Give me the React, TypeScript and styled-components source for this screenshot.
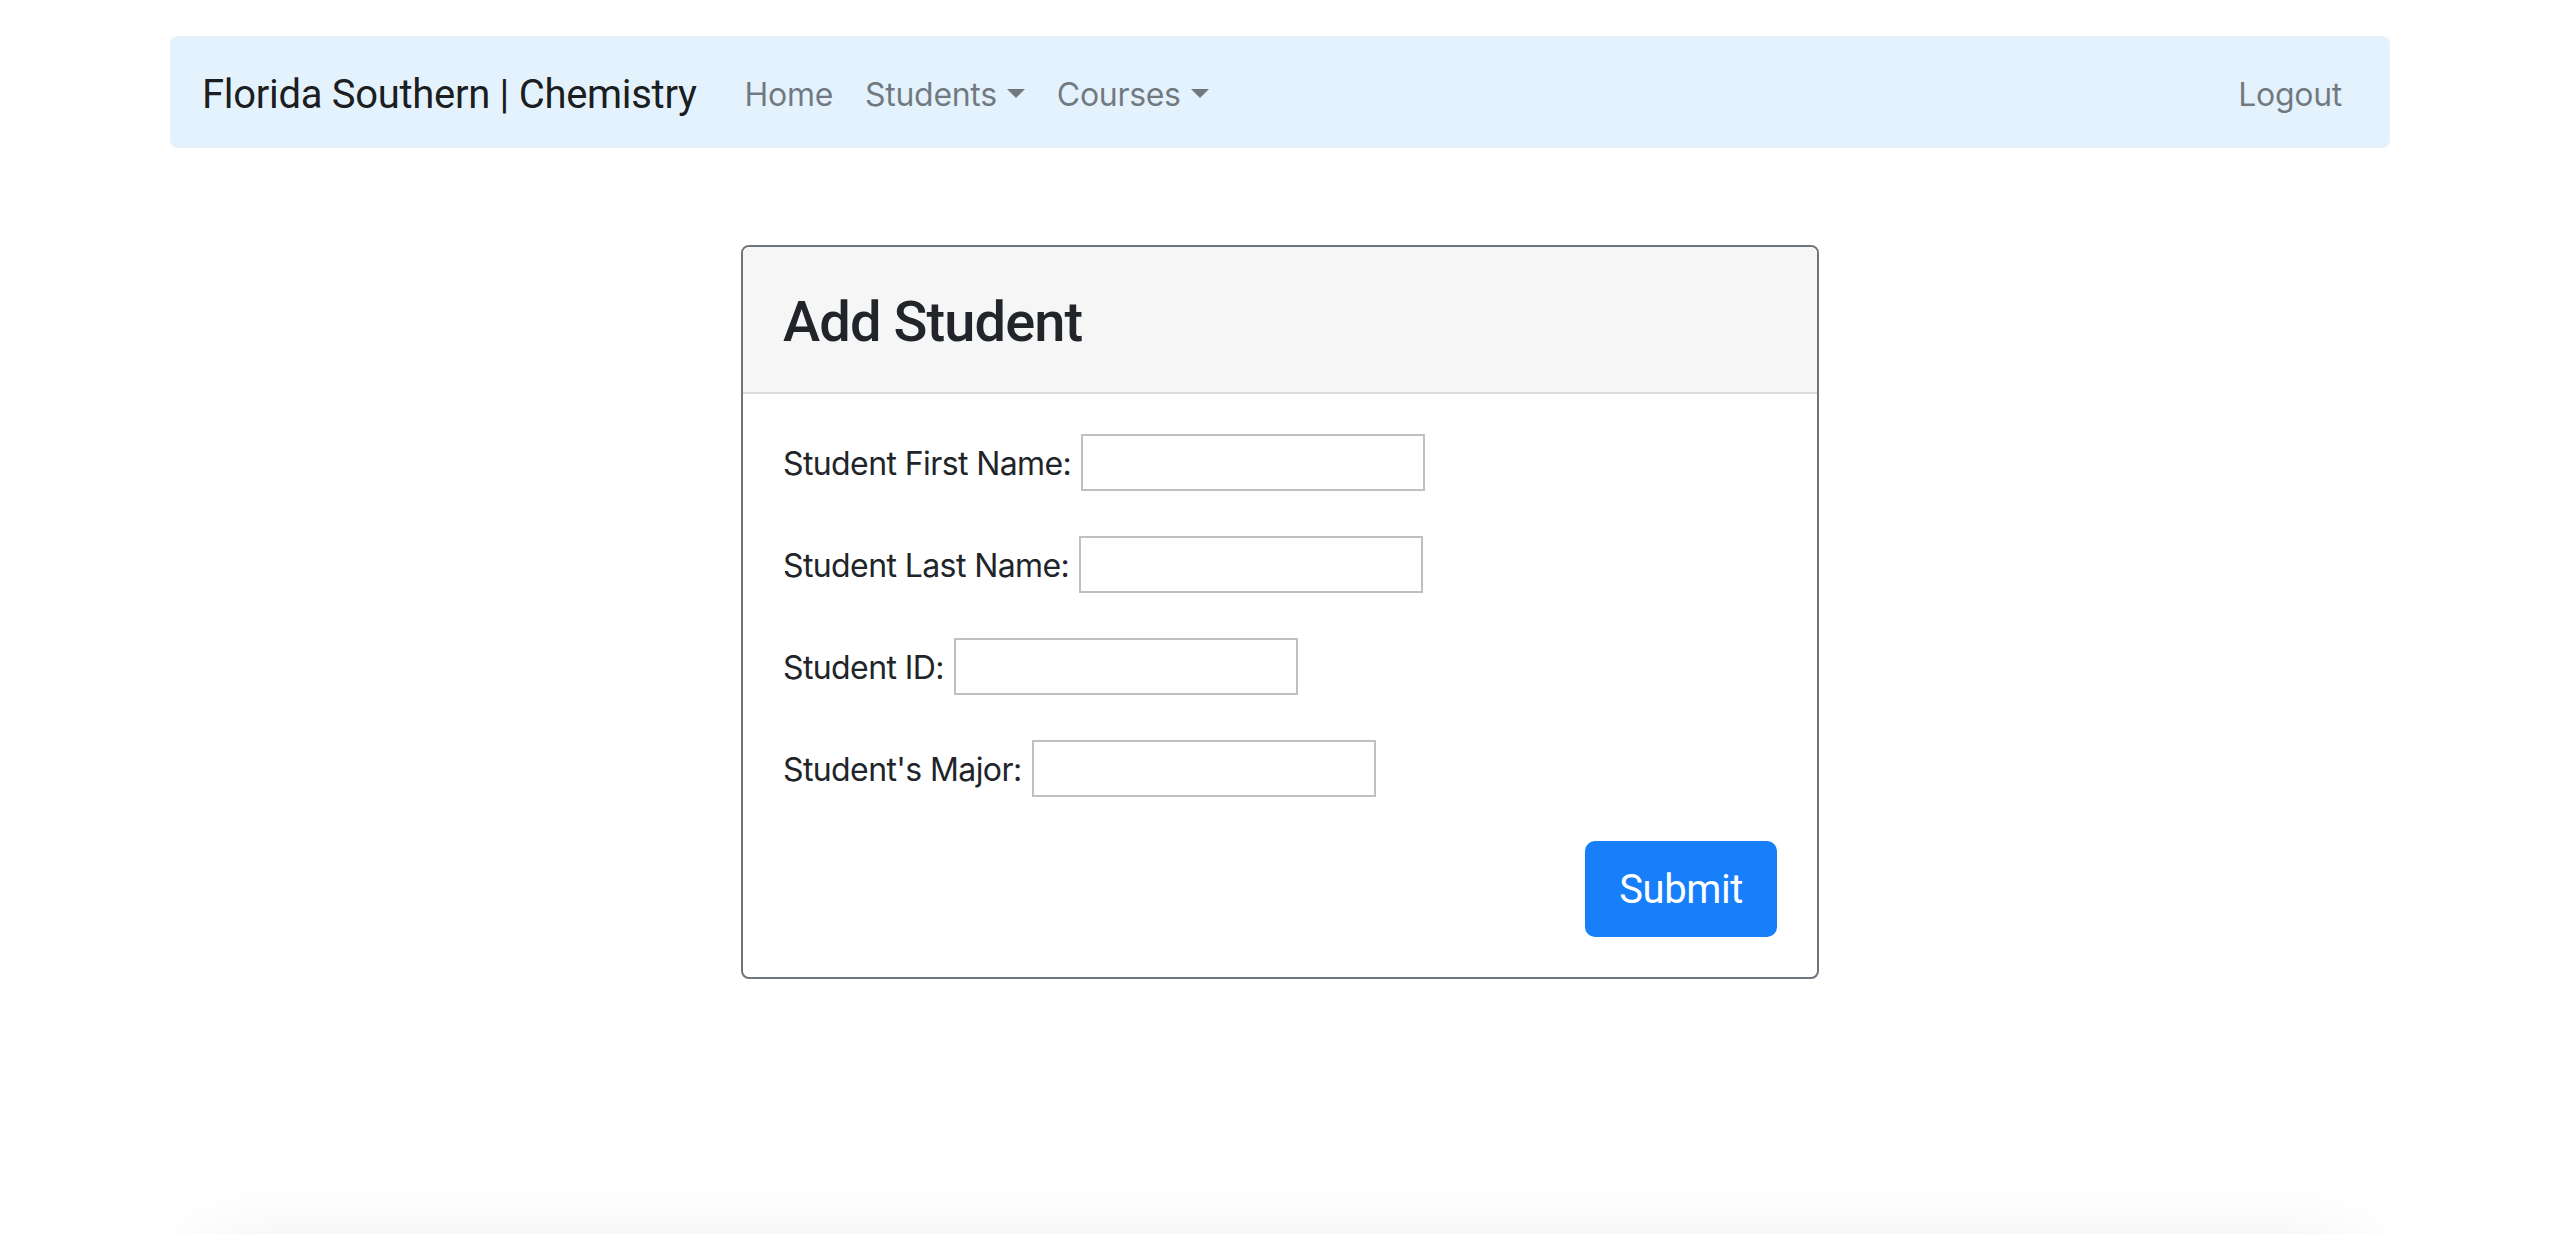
import styled, { createGlobalStyle } from 'styled-components';

const GlobalStyle = createGlobalStyle`
  html, body {
    margin: 0;
    padding: 0;
    background-color: #ffffff;
  }

  body {
    font-family: Inter, "Liberation Sans", sans-serif;
    color: #212529;
    overflow: hidden;
  }

  * {
    box-sizing: border-box;
  }
`;

// large text renders in the narrower display cut on the original, Roboto is closer there
const displayFont = `Roboto, Inter, "Liberation Sans", sans-serif`;

const Page = styled.div.withConfig({ displayName: 'Page' })`
  width: 2220px;
  margin: 0 auto;
  padding-top: 36px;
`;

const Navbar = styled.nav.withConfig({ displayName: 'Navbar' })`
  display: flex;
  align-items: center;
  height: 112px;
  padding: 19px 32px 13px;
  background-color: #e3f2fd;
  border-radius: 8px;
`;

const Brand = styled.a.withConfig({ displayName: 'Brand' })`
  margin-right: 32px;
  padding: 10px 0;
  font-family: ${displayFont};
  font-size: 40px;
  line-height: 60px;
  letter-spacing: -0.3px;
  color: rgba(0, 0, 0, 0.9);
  text-decoration: none;
  white-space: nowrap;
`;

const NavList = styled.ul.withConfig({ displayName: 'NavList' })`
  display: flex;
  flex: 1;
  margin: 0;
  padding: 0;
  list-style: none;
`;

const NavLink = styled.a.withConfig({ displayName: 'NavLink' })<{ $dropdown?: boolean }>`
  display: block;
  padding: 0 16px;
  font-size: 32px;
  line-height: 48px;
  letter-spacing: -0.3px;
  color: rgba(0, 0, 0, 0.5);
  text-decoration: none;
  cursor: pointer;

  ${({ $dropdown }) =>
    $dropdown &&
    `
    &::after {
      content: '';
      display: inline-block;
      margin-left: 10px;
      vertical-align: 8px;
      border-top: 9.6px solid;
      border-right: 9.6px solid transparent;
      border-left: 9.6px solid transparent;
    }
  `}
`;

const Main = styled.main.withConfig({ displayName: 'Main' })`
  display: flex;
  justify-content: center;
  padding-top: 97px;
`;

const Card = styled.div.withConfig({ displayName: 'Card' })`
  width: 1078px;
  border: 2px solid #6c757d;
  border-radius: 8px;
  overflow: hidden;
`;

const CardHeader = styled.div.withConfig({ displayName: 'CardHeader' })`
  padding: 42px 40px 36px;
  background-color: #f6f6f6;
  border-bottom: 2px solid #dcdcdc;
`;

const Title = styled.h3.withConfig({ displayName: 'Title' })`
  margin: 0;
  font-family: ${displayFont};
  font-size: 56px;
  font-weight: 500;
  line-height: 67.2px;
  letter-spacing: -0.9px;
  color: #212529;
`;

const CardBody = styled.form.withConfig({ displayName: 'CardBody' })`
  display: flex;
  flex-direction: column;
  gap: 45px;
  padding: 40px;
`;

const Field = styled.div.withConfig({ displayName: 'Field' })`
  display: flex;
  align-items: center;
  gap: 10px;
`;

const Label = styled.label.withConfig({ displayName: 'Label' })`
  padding-top: 3px;
  font-size: 32px;
  line-height: 48px;
  letter-spacing: -0.6px;
  color: #212529;
  white-space: nowrap;
`;

const TextInput = styled.input.withConfig({ displayName: 'TextInput' })`
  width: 344px;
  height: 57px;
  padding: 2px 4px;
  font-size: 26px;
  border: 2px solid #c0c0c0;
  background-color: #ffffff;
  outline: none;
`;

const Actions = styled.div.withConfig({ displayName: 'Actions' })`
  display: flex;
  justify-content: flex-end;
  margin-top: -1px;
`;

const SubmitButton = styled.button.withConfig({ displayName: 'SubmitButton' })`
  height: 96px;
  padding: 2px 32px 0;
  font-family: ${displayFont};
  font-size: 40px;
  line-height: 60px;
  letter-spacing: -0.4px;
  color: #ffffff;
  background-color: #187ffb;
  border: 2px solid #187ffb;
  border-radius: 10px;
  cursor: pointer;
`;

const Footer = styled.footer.withConfig({ displayName: 'Footer' })`
  height: 200px;
  margin: 295px 40px 0;
  background-color: #ffffff;
  box-shadow: 0 0 100px rgba(0, 0, 0, 0.16);
`;

const fields = [
  { id: 'firstName', label: 'Student First Name:' },
  { id: 'lastName', label: 'Student Last Name:' },
  { id: 'studentId', label: 'Student ID:' },
  { id: 'major', label: "Student's Major:" },
];

const App = () => {
  return (
    <>
      <GlobalStyle />
      <Page>
        <Navbar>
          <Brand href="#">Florida Southern | Chemistry</Brand>
          <NavList>
            <li>
              <NavLink href="#">Home</NavLink>
            </li>
            <li>
              <NavLink $dropdown>Students</NavLink>
            </li>
            <li>
              <NavLink $dropdown>Courses</NavLink>
            </li>
          </NavList>
          <NavLink href="#">Logout</NavLink>
        </Navbar>

        <Main>
          <Card>
            <CardHeader>
              <Title>Add Student</Title>
            </CardHeader>
            <CardBody onSubmit={(e) => e.preventDefault()}>
              {fields.map((field) => (
                <Field key={field.id}>
                  <Label htmlFor={field.id}>{field.label}</Label>
                  <TextInput id={field.id} type="text" />
                </Field>
              ))}
              <Actions>
                <SubmitButton type="submit">Submit</SubmitButton>
              </Actions>
            </CardBody>
          </Card>
        </Main>

        <Footer />
      </Page>
    </>
  );
};

export default App;
